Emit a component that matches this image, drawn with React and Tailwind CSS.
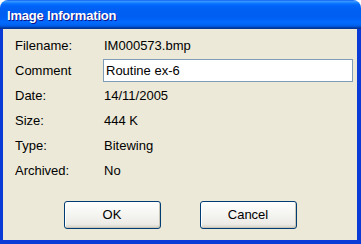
const rows = [
  { label: "Filename:", value: "IM000573.bmp", h: "h-[24px]" },
  { label: "Comment", input: "Routine ex-6", h: "h-[25px]" },
  { label: "Date:", value: "14/11/2005", h: "h-[25px]" },
  { label: "Size:", value: "444 K", h: "h-[26px]" },
  { label: "Type:", value: "Bitewing", h: "h-[24px]" },
  { label: "Archived:", value: "No", h: "h-[26px]" },
];

function XpButton({ children }) {
  return (
    <button className="w-[97px] h-[28px] rounded-[3px] border border-[#003c74] bg-[linear-gradient(to_bottom,#ffffff_0%,#f6f6f3_40%,#ecebe6_85%,#d6d0c5_100%)] shadow-[inset_-1px_-1px_0_#c9c6b8,inset_1px_1px_0_#ffffff] text-[13px] text-black">
      {children}
    </button>
  );
}

export default function App() {
  return (
    <div className="w-[361px] h-[244px] bg-white flex flex-col font-['Liberation_Sans',Arial,sans-serif]">
      {/* title bar */}
      <div className="h-[29px] shrink-0 rounded-t-[8px] bg-[linear-gradient(to_bottom,#0058ee_0%,#3d95ff_4%,#2a8fff_7%,#1580ff_10%,#0670ff_14%,#0064f8_20%,#0060f4_30%,#005ef2_56%,#0062f7_66%,#026afe_76%,#0064f2_86%,#0052d6_92%,#0040ab_95%,#003092_100%)] flex items-center pl-[7px] pt-[3px]">
        <span className="text-white font-bold text-[13px] tracking-[-0.2px] [text-shadow:1px_1px_#0f1089]">
          Image Information
        </span>
      </div>

      {/* body */}
      <div className="flex-1 bg-[#ece9d8] border-l-[3px] border-r-4 border-b-4 border-[#0b3bd6] pt-[5px] pl-[12px] text-[13px] text-black">
        {rows.map((r) => (
          <div key={r.label} className={`flex items-center ${r.h}`}>
            <div className="w-[88px] shrink-0">{r.label}</div>
            {r.input ? (
              <div className="w-[250px] h-[23px] border border-[#7f9db9] bg-white flex items-center pl-[2px]">
                {r.input}
              </div>
            ) : (
              <div className="pl-[1px]">{r.value}</div>
            )}
          </div>
        ))}

        <div className="flex justify-center gap-[39px] mt-[17px] pr-[12px]">
          <XpButton>OK</XpButton>
          <XpButton>Cancel</XpButton>
        </div>
      </div>
    </div>
  );
}
